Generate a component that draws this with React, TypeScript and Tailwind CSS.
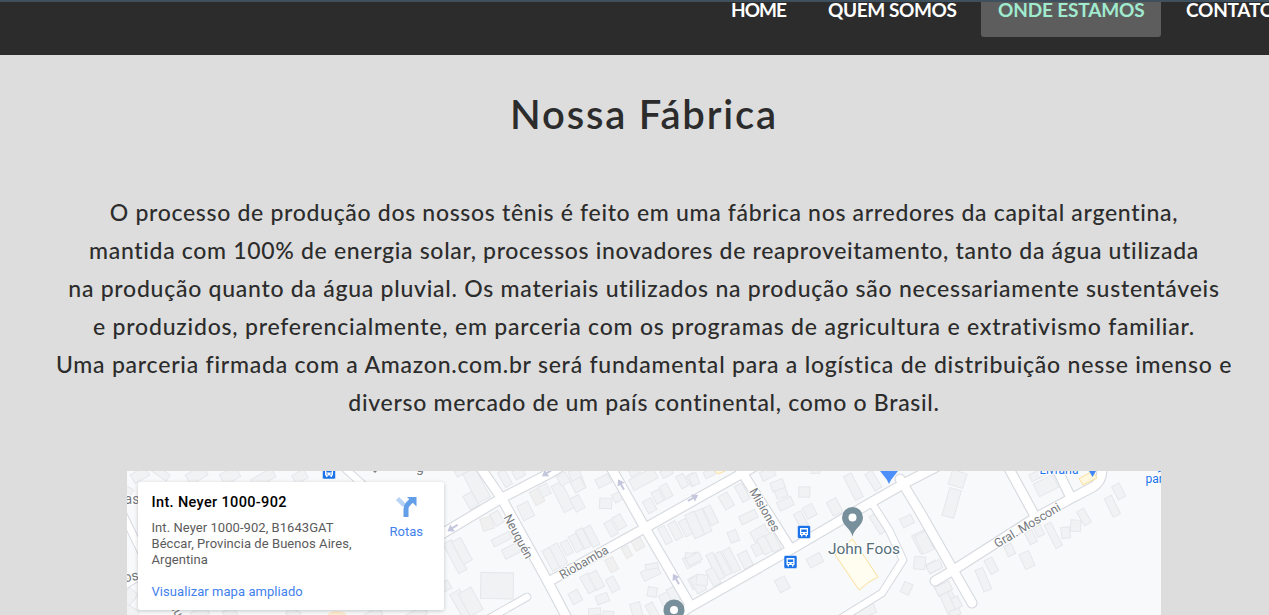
type Block = [number, number, number, number, number];

const navItems = [
  { label: 'HOME', box: 'w-[89px] mr-2', text: 'tracking-[-1px]' },
  { label: 'QUEM SOMOS', box: 'w-[163px] mr-[7px]', text: 'tracking-[-0.4px]' },
  { label: 'ONDE ESTAMOS', box: 'w-[180px] mr-2', text: 'tracking-[-0.15px]', active: true },
  { label: 'CONTATO', box: 'w-[124px]', text: 'tracking-[-0.25px]' },
];

const lines = [
  { text: 'O processo de produção dos nossos tênis é feito em uma fábrica nos arredores da capital argentina,', tracking: 'tracking-[0.683px]' },
  { text: 'mantida com 100% de energia solar, processos inovadores de reaproveitamento, tanto da água utilizada', tracking: 'tracking-[0.678px]' },
  { text: 'na produção quanto da água pluvial. Os materiais utilizados na produção são necessariamente sustentáveis', tracking: 'tracking-[0.738px]' },
  { text: 'e produzidos, preferencialmente, em parceria com os programas de agricultura e extrativismo familiar.', tracking: 'tracking-[0.79px]' },
  { text: 'Uma parceria firmada com a Amazon.com.br será fundamental para a logística de distribuição nesse imenso e', tracking: 'tracking-[0.77px]' },
  { text: 'diverso mercado de um país continental, como o Brasil.', tracking: 'tracking-[0.695px]' },
];

// Building footprints per map tile: centre x, centre y, width, height, rotation.
const west: Block[] = [
  [60, 30, 50, 30, -30], [120, 22, 60, 22, 35], [230, 30, 60, 34, -30], [330, 32, 54, 36, -30], [430, 40, 70, 30, -30], [540, 35, 40, 30, -30],
  [20, 80, 30, 30, 30], [28, 395, 34, 44, 40], [30, 440, 50, 30, 30], [240, 445, 50, 30, -30], [330, 445, 36, 30, -30], [520, 445, 40, 24, 30], [760, 448, 50, 26, -30], [890, 448, 60, 28, -30],
];
const centerWest: Block[] = [
  [65, 18, 40, 20, -30], [110, 62, 42, 98, -28], [93, 107, 30, 46, -30], [195, 40, 24, 50, -30], [236, 25, 32, 28, -30],
  [257, 138, 36, 48, -26], [313, 76, 30, 34, -26], [368, 96, 34, 88, -27], [370, 42, 30, 32, -28], [411, 44, 34, 62, -20], [412, 115, 30, 44, -28], [414, 60, 34, 36, -28],
  [490, 48, 42, 28, -26], [497, 115, 36, 31, 2], [533, 96, 28, 26, -28], [171, 160, 28, 40, -30],
  [185, 222, 60, 22, -27], [213, 258, 50, 30, -27], [45, 275, 28, 100, -28], [66, 258, 30, 76, -28],
  [171, 362, 98, 78, 1], [14, 365, 34, 28, -28], [66, 420, 34, 90, -30], [92, 410, 44, 76, -29],
  [334, 282, 28, 68, -28], [355, 270, 27, 68, -28], [380, 248, 24, 42, -28], [408, 234, 25, 52, -28], [430, 220, 22, 60, -28], [455, 214, 23, 64, -28],
  [513, 190, 24, 46, -30], [538, 171, 28, 42, -30],
  [610, 42, 82, 35, -28], [583, 20, 30, 20, -28], [680, 23, 34, 22, -28], [629, 122, 28, 40, -28], [653, 95, 25, 38, -28], [678, 79, 25, 42, -28], [727, 48, 24, 40, -28], [757, 44, 23, 36, -28],
  [675, 210, 22, 54, -28], [706, 197, 25, 54, -28], [737, 188, 24, 50, -28], [764, 176, 24, 68, -28],
  [755, 286, 46, 34, -27], [756, 272, 40, 16, 3], [767, 350, 36, 34, -28],
  [445, 355, 28, 56, -29], [469, 346, 28, 54, -29], [518, 358, 26, 44, -28], [406, 396, 31, 36, -28], [487, 401, 37, 27, -20], [464, 440, 36, 20, -5], [505, 449, 32, 20, 5], [590, 438, 30, 50, -15], [637, 437, 24, 46, -30],
  [632, 324, 54, 30, -26], [635, 304, 37, 16, -10], [637, 381, 28, 28, 10], [676, 402, 30, 35, -26], [702, 388, 30, 44, -28],
];
const warm: Block[] = [[141, 176, 34, 38, -18], [291, 95, 30, 44, -28], [515, 299, 26, 42, -28], [561, 261, 20, 34, -28], [594, 237, 30, 33, -28]];
const centerEast: Block[] = [
  [12, 43, 24, 34, -20], [58, 25, 32, 20, -28], [109, 108, 30, 46, -30], [157, 83, 25, 54, -28], [175, 156, 53, 26, -26],
  [62, 151, 24, 58, -26], [38, 170, 28, 74, -24], [14, 180, 32, 76, -24], [130, 214, 27, 34, -22],
  [233, 27, 42, 28, -26], [263, 61, 40, 28, -20], [274, 85, 34, 26, -20], [286, 116, 46, 28, -24], [343, 81, 33, 31, 2], [333, 165, 25, 50, -28], [359, 139, 32, 37, -28], [376, 18, 26, 14, 0],
  [210, 206, 50, 36, -30], [204, 252, 31, 36, -26], [224, 241, 27, 52, -28], [249, 231, 27, 54, -28],
  [434, 126, 32, 46, -28], [490, 65, 26, 80, -27], [550, 47, 24, 58, -32],
  [76, 304, 22, 84, -26], [99, 296, 20, 74, -28], [124, 286, 25, 74, -28], [166, 284, 30, 48, -26], [70, 336, 25, 52, -28], [25, 358, 30, 50, -28], [12, 282, 44, 24, -28], [36, 345, 34, 32, 5],
  [375, 286, 44, 30, -28], [277, 358, 33, 40, -28], [525, 438, 62, 34, -23],
  [570, 172, 38, 62, -32], [651, 168, 37, 28, -26], [698, 230, 44, 60, -27], [689, 294, 34, 38, 5], [728, 306, 34, 30, -28], [650, 370, 27, 34, 25], [748, 375, 20, 36, -28],
];
const east: Block[] = [
  [113, 42, 45, 45, 17], [95, 114, 36, 86, 16], [378, 62, 64, 42, -26], [352, 30, 46, 22, -26],
  [400, 211, 22, 78, -27], [437, 203, 26, 33, -8], [467, 182, 30, 34, 4], [492, 156, 24, 48, -30], [577, 124, 24, 62, -26], [596, 79, 25, 44, -27],
  [333, 217, 24, 38, -27], [357, 198, 22, 32, -27], [269, 255, 24, 34, -25], [321, 285, 31, 49, -24], [214, 302, 26, 46, -28], [190, 344, 25, 70, -23],
  [71, 370, 46, 28, -25], [83, 396, 37, 28, -25], [101, 417, 41, 34, -28], [85, 418, 26, 68, -24], [105, 443, 32, 18, -20], [13, 233, 37, 60, -25], [43, 304, 43, 27, -24],
];

const roads = [
  'M445 532 L502 498 L552 472 L565 464',
  'M478 464 L502 499 L548 582 L567 618',
  'M548 582 L645 528 L700 497 L743 473 L755 466',
  'M738 466 L790 548',
  'M672 619 L690 607 L790 550 L870 503 L907 482 L940 465',
  'M609 464 L645 528 L690 605',
  'M900 479 L920 512 L952 568 L972 603',
  'M935 581 L952 571 L1035 518 L1072 498 L1093 487 Q1103 481 1102 466',
  'M1007 465 L1036 518',
  'M1055 465 L1071 498',
  'M425 545 L445 532',
];
const lanes = ['M873 505 L889 530 L903 560 L882 593 L840 619', 'M527 597 L488 619', 'M120 588 L150 570', 'M120 508 L150 570', 'M340 464 L380 500'];

function Tile({ x, y, blocks, className }: { x: number; y: number; blocks: Block[]; className: string }) {
  return (
    <g transform={`translate(${x} ${y}) scale(0.33333)`} className={className} strokeWidth="3">
      {blocks.map(([cx, cy, w, h, r], i) => (
        <rect key={i} x={-w / 2} y={-h / 2} width={w} height={h} transform={`translate(${cx} ${cy}) rotate(${r})`} />
      ))}
    </g>
  );
}

function Arrow({ x, y, r }: { x: number; y: number; r: number }) {
  return <path transform={`translate(${x} ${y}) rotate(${r})`} d="M-6 -1 H0 V-4 L6 0 L0 4 V1 H-6Z" fill="#c3c6dc" />;
}

function BusStop({ x, y }: { x: number; y: number }) {
  return (
    <g transform={`translate(${x} ${y})`}>
      <rect x="-6.5" y="-6.5" width="13" height="13" rx="1.5" fill="#1a73e8" stroke="#fff" strokeWidth=".5" />
      <path d="M-4 -4 H4 V3 H3 V4.5 H1.5 V3 H-1.5 V4.5 H-3 V3 H-4Z" fill="#fff" />
      <path d="M-2.7 -2.5 H2.7 V0 H-2.7Z M-2.6 1 H-1.2 V2 H-2.6Z M1.2 1 H2.6 V2 H1.2Z" fill="#1a73e8" />
    </g>
  );
}

function Pin({ x, y }: { x: number; y: number }) {
  return (
    <g transform={`translate(${x} ${y})`}>
      <path d="M0 19 C-1.5 11 -10.5 8 -10.5 0 A10.5 10.5 0 1 1 10.5 0 C10.5 8 1.5 11 0 19Z" fill="#78909c" />
      <circle r="4" fill="#fff" />
    </g>
  );
}

function MapCanvas() {
  return (
    <svg viewBox="127 471 1034 144" className="block h-36 w-[1034px] font-['Roboto',sans-serif]">
      <rect x="127" y="471" width="1034" height="144" fill="#f8f9fb" />
      <Tile x={120} y={465} blocks={west} className="fill-[#f1f2f4] stroke-[#e5e7ea]" />
      <Tile x={440} y={465} blocks={centerWest} className="fill-[#f0f2f4] stroke-[#e5e7ea]" />
      <Tile x={440} y={465} blocks={warm} className="fill-[#f1f0f0] stroke-[#e9e8e8]" />
      <Tile x={690} y={465} blocks={centerEast} className="fill-[#f0f2f4] stroke-[#e5e7ea]" />
      <Tile x={920} y={465} blocks={east} className="fill-[#f0f2f4] stroke-[#e5e7ea]" />
      <g fill="none" strokeLinecap="round" strokeLinejoin="round">
        <g stroke="#d6d9df">
          {roads.map((d) => <path key={d} d={d} strokeWidth="11" />)}
          {lanes.map((d) => <path key={d} d={d} strokeWidth="8.6" />)}
        </g>
        <g stroke="#fff">
          {roads.map((d) => <path key={d} d={d} strokeWidth="8.8" />)}
          {lanes.map((d) => <path key={d} d={d} strokeWidth="6.6" />)}
        </g>
      </g>
      <path d="M852.5 539 L878 577 L869 582 L866 584.5 L859 590 L836 556 L835.5 554Z" fill="#fffcf0" stroke="#fbdf9b" strokeWidth="1" />
      <path d="M1079 478.500 L1093 471 L1097 478 L1083 485Z M715 471 L718 474 L725 471" fill="#fff8df" stroke="#fbdf9b" strokeWidth="1" />
      <ellipse cx="337" cy="616" rx="10" ry="5" fill="#fdebd0" />
      <Arrow x={452.500} y={528} r={148} />
      <Arrow x={547} y={473} r={148} />
      <Arrow x={621} y={484.500} r={-120} />
      <Arrow x={693} y={498} r={-30} />
      <Arrow x={676} y={579} r={-120} />
      <g fill="#74787d" stroke="#fff" strokeWidth="2" paintOrder="stroke" fontSize="12.5" textAnchor="middle">
        <text transform="translate(514.500 538.500) rotate(62)" textLength="48" lengthAdjust="spacingAndGlyphs">Neuquén</text>
        <text transform="translate(586 566) rotate(-30)" textLength="54" lengthAdjust="spacingAndGlyphs">Riobamba</text>
        <text transform="translate(761 512) rotate(60)" textLength="48" lengthAdjust="spacingAndGlyphs">Misiones</text>
        <text transform="translate(1029.500 529) rotate(-31)" textLength="75" lengthAdjust="spacingAndGlyphs">Gral. Mosconi</text>
        <text x="132" y="503.500" fontSize="14">as</text>
        <text transform="translate(132 581) rotate(-12)" fontSize="14">os</text>
        <text transform="translate(173 612) rotate(60)">nu</text>
        <text x="420" y="471.500" fontSize="14">g</text>
      </g>
      <path d="M373 471 L377 471 L375 473Z" fill="#7b7f84" />
      <BusStop x={329} y={472.500} />
      <BusStop x={804} y={532} />
      <BusStop x={790.500} y={562} />
      <Pin x={852.500} y={517.500} />
      <Pin x={674} y={610} />
      <path d="M880 471 H898 Q894 476 891 480 L889 484 L887 480 Q884 476 880 471Z" fill="#4d90fb" />
      <path d="M1089 471 H1096 L1092.500 477Z" fill="#4285f4" />
      <text x="828" y="554" fontSize="14.500" fill="#546e7a" stroke="#fff" strokeWidth="2" paintOrder="stroke" textLength="72" lengthAdjust="spacingAndGlyphs">John Foos</text>
      <g fill="#1a73e8" fontSize="12" stroke="#fff" strokeWidth="2" paintOrder="stroke">
        <text x="1039.500" y="474" textLength="39" lengthAdjust="spacingAndGlyphs">Livraria</text>
        <text x="1145.500" y="482.500">para</text>
        <path d="M1158 472 L1161 471" stroke="#1a73e8" strokeWidth="1" />
      </g>
    </svg>
  );
}

export default function App() {
  return (
    <div className="h-[615px] w-[1269px] overflow-hidden bg-[#dddddd] font-['Lato',sans-serif] text-[#2c2c2c]">
      <div className="w-[1288px]">
        <header className="h-[55px] border-t-2 border-[#3e505d] bg-[#2c2c2c]">
          <nav className="flex pl-[714px] text-[19px] font-bold leading-[15px] text-white">
            {navItems.map((item) => (
              <a
                key={item.label}
                className={`h-[35px] shrink-0 whitespace-nowrap rounded-b-[3px] pl-[17px] ${item.box} ${item.text} ${item.active ? 'bg-[#5d5d5d] text-[#a0ebcf]' : ''}`}
              >
                {item.label}
              </a>
            ))}
          </nav>
        </header>
        <main className="flex flex-col items-center">
          <h1 className="mt-[35px] h-12 text-[40px] font-semibold leading-[48px] tracking-[1.8px]">Nossa Fábrica</h1>
          <div className="mt-[55px] text-center text-[23px] font-medium leading-[38px]">
            {lines.map((line) => (
              <p key={line.text} className={`whitespace-nowrap ${line.tracking}`}>{line.text}</p>
            ))}
          </div>
          <section className="mt-[50px] grid h-36 w-[1034px] overflow-hidden font-['Roboto',sans-serif]">
            <div className="col-start-1 row-start-1">
              <MapCanvas />
            </div>
            <div className="z-10 col-start-1 row-start-1 ml-[11px] mt-[11px] flex h-[128px] w-[306px] justify-between rounded-[2px] bg-white pl-[13.5px] shadow-[0_1px_4px_rgba(0,0,0,0.2)]">
              <div className="flex flex-col whitespace-nowrap text-[13px] leading-4 tracking-[0.06px] text-[#5b5b5b]">
                <h2 className="mt-[11px] text-[14.5px] font-medium leading-5 tracking-[0.35px] text-black">Int. Neyer 1000-902</h2>
                <p className="mt-[7px]">Int. Neyer 1000-902, B1643GAT<br />Béccar, Provincia de Buenos Aires,<br />Argentina</p>
                <a className="mt-4 text-[#427fed]">Visualizar mapa ampliado</a>
              </div>
              <div className="mr-[21px] mt-[13px] flex flex-col items-center text-[13px] text-[#427fed]">
                <svg viewBox="0 0 22 22" className="h-[22px] w-[22px]">
                  <path d="M2.500 3.500 L9.500 10.500" stroke="#b8d3f5" strokeWidth="4.5" />
                  <path d="M11 22 V14 Q11 11 13 9 L17 5" fill="none" stroke="#639ee8" strokeWidth="5" />
                  <path d="M12 2 H21.500 V11.500Z" fill="#639ee8" />
                </svg>
                <span className="mt-[7px] leading-4">Rotas</span>
              </div>
            </div>
          </section>
        </main>
      </div>
    </div>
  );
}
